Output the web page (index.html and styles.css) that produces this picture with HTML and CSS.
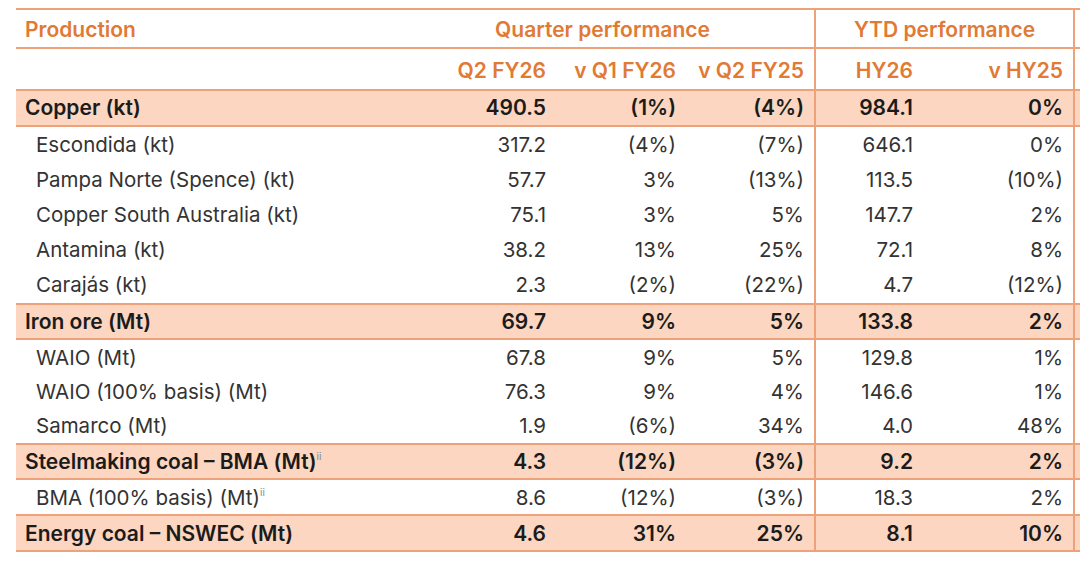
FILE: index.html
```html
<!DOCTYPE html>
<html>
<head>
<meta charset="utf-8">
<link rel="stylesheet" href="styles.css">
</head>
<body>
<div class="wrap">
<table class="prod">
  <colgroup>
    <col class="c1"><col class="c2"><col class="c3"><col class="c4"><col class="c5"><col class="c6"><col class="c7">
  </colgroup>
  <thead>
    <tr class="h1">
      <th class="lbl">Production</th>
      <th colspan="3" class="grp">Quarter performance</th>
      <th colspan="2" class="grp vl vr">YTD performance</th>
      <th></th>
    </tr>
    <tr class="h2">
      <th></th>
      <th>Q2 FY26</th>
      <th>v Q1 FY26</th>
      <th>v Q2 FY25</th>
      <th class="vl">HY26</th>
      <th class="vr">v HY25</th>
      <th></th>
    </tr>
  </thead>
  <tbody>
    <tr class="main"><td>Copper (kt)</td><td>490.5</td><td>(1%)</td><td>(4%)</td><td class="vl">984.1</td><td class="vr">0%</td><td></td></tr>
    <tr class="sub"><td>Escondida (kt)</td><td>317.2</td><td>(4%)</td><td>(7%)</td><td class="vl">646.1</td><td class="vr">0%</td><td></td></tr>
    <tr class="sub"><td>Pampa Norte (Spence) (kt)</td><td>57.7</td><td>3%</td><td>(13%)</td><td class="vl">113.5</td><td class="vr">(10%)</td><td></td></tr>
    <tr class="sub"><td>Copper South Australia (kt)</td><td>75.1</td><td>3%</td><td>5%</td><td class="vl">147.7</td><td class="vr">2%</td><td></td></tr>
    <tr class="sub"><td>Antamina (kt)</td><td>38.2</td><td>13%</td><td>25%</td><td class="vl">72.1</td><td class="vr">8%</td><td></td></tr>
    <tr class="sub"><td>Carajás (kt)</td><td>2.3</td><td>(2%)</td><td>(22%)</td><td class="vl">4.7</td><td class="vr">(12%)</td><td></td></tr>
    <tr class="main"><td>Iron ore (Mt)</td><td>69.7</td><td>9%</td><td>5%</td><td class="vl">133.8</td><td class="vr">2%</td><td></td></tr>
    <tr class="sub tight"><td>WAIO (Mt)</td><td>67.8</td><td>9%</td><td>5%</td><td class="vl">129.8</td><td class="vr">1%</td><td></td></tr>
    <tr class="sub tight"><td>WAIO (100% basis) (Mt)</td><td>76.3</td><td>9%</td><td>4%</td><td class="vl">146.6</td><td class="vr">1%</td><td></td></tr>
    <tr class="sub tight"><td>Samarco (Mt)</td><td>1.9</td><td>(6%)</td><td>34%</td><td class="vl">4.0</td><td class="vr">48%</td><td></td></tr>
    <tr class="main"><td>Steelmaking coal – BMA (Mt)<sup>ii</sup></td><td>4.3</td><td>(12%)</td><td>(3%)</td><td class="vl">9.2</td><td class="vr">2%</td><td></td></tr>
    <tr class="sub tight"><td>BMA (100% basis) (Mt)<sup>ii</sup></td><td>8.6</td><td>(12%)</td><td>(3%)</td><td class="vl">18.3</td><td class="vr">2%</td><td></td></tr>
    <tr class="main"><td>Energy coal – NSWEC (Mt)</td><td>4.6</td><td>31%</td><td>25%</td><td class="vl">8.1</td><td class="vr">10%</td><td></td></tr>
  </tbody>
</table>
</div>
</body>
</html>
```
FILE: styles.css
```css
html, body {
  margin: 0;
  padding: 0;
  background: #ffffff;
}
body {
  width: 1080px;
  height: 563px;
  overflow: hidden;
}
.wrap {
  padding: 8px 0 0 16px;
}
.prod {
  border-collapse: collapse;
  table-layout: fixed;
  width: 1100px;
  font-family: Inter, "Noto Sans", sans-serif;
  font-size: 20.5px;
  color: #2b2b2b;
}
.c1 { width: 375px; }
.c2 { width: 165px; }
.c3 { width: 130px; }
.c4 { width: 129px; }
.c5 { width: 108px; }
.c6 { width: 151px; }
.c7 { width: 42px; }

.prod th, .prod td {
  padding: 0 10px 0 10px;
  text-align: right;
  white-space: nowrap;
}
.prod th:first-child, .prod td:first-child {
  text-align: left;
  padding-left: 9px;
}
.prod thead th {
  color: #e07a35;
  font-weight: 600;
  font-size: 21px;
}
.h1 th {
  height: 36px;
  padding-top: 1px;
  border-top: 2px solid #eda27a;
  border-bottom: 2px solid #eda27a;
}
.h1 th.grp { text-align: center; padding: 1px 0 0 0; }
.h2 th { height: 38px; padding-top: 2px; }
.vl { border-left: 2px solid #eda27a; }
.vr { border-right: 2px solid #eda27a; }

.main td {
  background: #fcd6c0;
  font-weight: 600;
  font-size: 21px;
  color: #1b1b1b;
  height: 33.6px;
  border-top: 2px solid #eda27a;
  border-bottom: 2px solid #eda27a;
}
.sub td {
  height: 35.2px;
  color: #333;
  font-weight: 400;
}
.sub.tight td { height: 34.2px; }
.sub td:first-child { padding-left: 20px; }
.prod sup {
  font-size: 10px;
  color: #888;
  font-weight: 400;
  vertical-align: 9px;
  line-height: 0;
}
```
